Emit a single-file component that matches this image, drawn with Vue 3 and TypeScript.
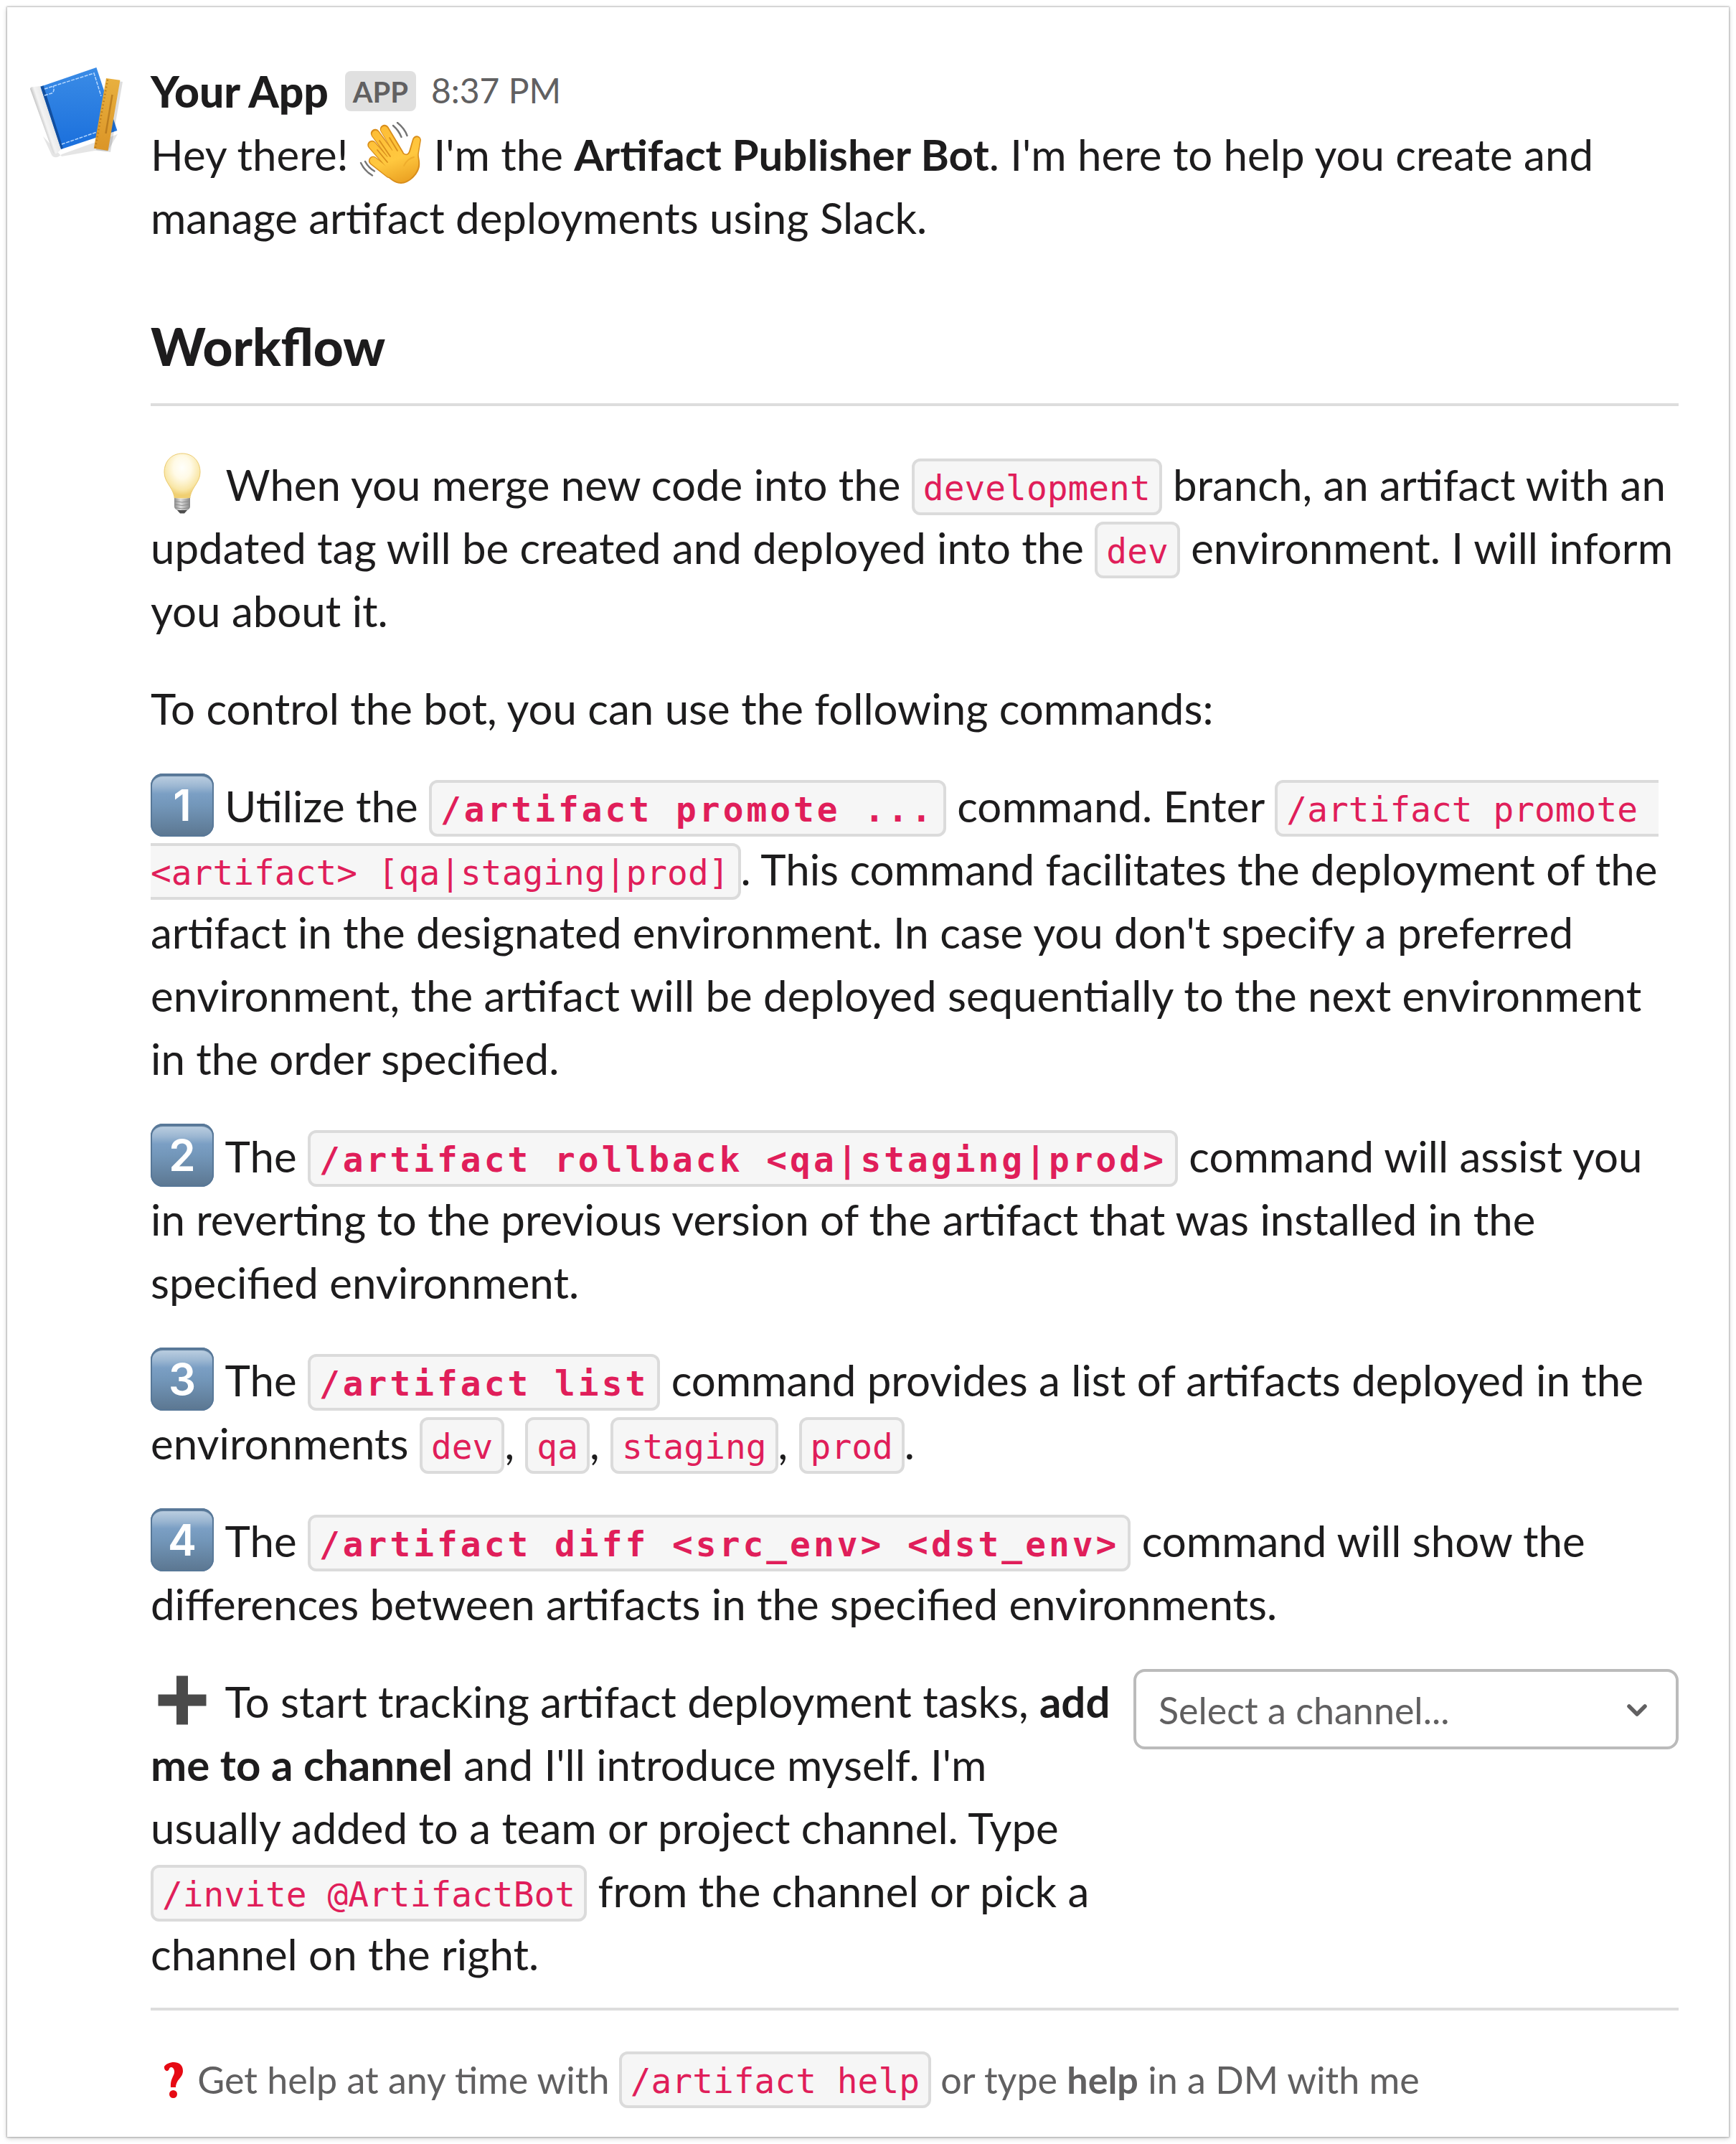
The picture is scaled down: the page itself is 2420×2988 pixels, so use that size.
<script setup lang="ts">
const environments: string[] = ['dev', 'qa', 'staging', 'prod']
</script>

<template>
  <main class="card">
    <svg class="avatar" viewBox="36 86 144 144">
      <defs>
        <linearGradient id="cover" x1="0" y1="0" x2="0" y2="1">
          <stop offset="0" stop-color="#3b8ce6" />
          <stop offset="1" stop-color="#1a6fdc" />
        </linearGradient>
        <linearGradient id="pages" gradientUnits="userSpaceOnUse" x1="56" y1="168" x2="71" y2="163">
          <stop offset="0" stop-color="#bdbdbd" />
          <stop offset=".4" stop-color="#f4f4f4" />
          <stop offset="1" stop-color="#e6e6e6" />
        </linearGradient>
        <linearGradient id="ruler" x1="0" y1="0" x2="0" y2="1">
          <stop offset="0" stop-color="#e8b03f" />
          <stop offset="1" stop-color="#db9527" />
        </linearGradient>
      </defs>
      <path d="M60 190l12 26c3 5 9 4 14-1l78-28-14 24-18-1-46 8z" fill="#000" opacity=".1" />
      <path d="M42 124q0-3 4-3l11-1 28 88-5 5q-5 4-7-3z" fill="url(#pages)" />
      <path d="M56.500 120.700L134.400 94l29 88-78.200 26z" fill="url(#cover)" />
      <path d="M56.500 120.700l4-1.400 27.500 87.500-3 1z" fill="#124f9f" />
      <path
        d="M62 124l69-22 10 32M86 201l49-17M62 133l10-3q5-3 2-10"
        fill="none" stroke="#b7d8ff" stroke-width="1.500" stroke-dasharray="5 1.500"
      />
      <path d="M151 111l20 3-17 98-20-3z" fill="#000" opacity=".13" />
      <path d="M148 109l19.400 2.700L150.600 210l-19.800-3.300z" fill="url(#ruler)" />
      <path d="M150 111L133 206" stroke="#b9791b" stroke-width="2.500" stroke-dasharray="1.500 3.500" fill="none" />
      <path d="M156.500 132l-9 54" stroke="#a96c17" stroke-width="2.500" opacity=".65" fill="none" />
    </svg>

    <section class="message">
      <header class="sender">
        <strong class="name">Your App</strong>
        <span class="badge">APP</span>
        <time class="time">8:37 PM</time>
      </header>

      <p class="intro">
        Hey there!
        <svg class="emoji" viewBox="0 0 88 88">
          <defs>
            <linearGradient id="skin" gradientUnits="userSpaceOnUse" x1="30" y1="0" x2="60" y2="88">
              <stop offset="0" stop-color="#fdbc35" />
              <stop offset=".6" stop-color="#ffc83f" />
              <stop offset="1" stop-color="#e99e20" />
            </linearGradient>
          </defs>
          <g fill="none" stroke-linecap="round">
            <g stroke="#d98e1b" stroke-width="12.500">
              <path d="M35 10L56 45" /><path d="M22 16L47 50" /><path d="M17.500 32L42 60" /><path d="M19 54L42 72" />
            </g>
            <path
              d="M37 62L34 53 49 34 60 42C66 46 67 45 69 41L74 24C76 17 85 18 86 25L83 43C82 49 85 53 84 62C82 74 69 86 58 86C50 86 42 80 34 71z"
              fill="#d98e1b"
            />
            <g stroke="url(#skin)" stroke-width="10">
              <path d="M35 11L56 46" /><path d="M22.500 17L47 50" /><path d="M18 32.500L42 60" /><path d="M19.500 54L42 72" />
            </g>
            <path
              d="M38 63L36 53 50 35 60 44C66 48 69 46 71 41L75.500 25C77 20 84 20 84.500 25L81.500 43C80.500 49 83 53 82 61C80 73 68 84 58 84C50 84 43 78 36 71z"
              fill="url(#skin)"
            />
            <path d="M28 26L43 48M25 39L39 56M42 22L53 40" stroke="#d98e1b" stroke-width="1.800" />
            <path d="M62 61q5-10 14-12" stroke="#efad2c" stroke-width="1.800" />
            <path d="M53 1q10 8 13.500 18M47 5q8 7 11.500 16M2 57q5 11 16 17.500M8 55q5 9 13 13.500" stroke="#757575" stroke-width="2.400" />
          </g>
        </svg>
        I'm the <b>Artifact Publisher Bot</b>. I'm here to help you create and manage artifact deployments using Slack.
      </p>

      <h1>Workflow</h1>
      <hr />

      <div class="body">
        <p>
          <svg class="emoji wide" viewBox="0 0 88 88">
            <defs>
              <radialGradient id="glass" cx=".5" cy=".32" r=".62">
                <stop offset="0" stop-color="#fffffb" />
                <stop offset=".4" stop-color="#fffae6" />
                <stop offset=".8" stop-color="#f9e7a8" />
                <stop offset="1" stop-color="#f0cf72" />
              </radialGradient>
              <linearGradient id="socket" x1="0" y1="0" x2="1" y2="0">
                <stop offset="0" stop-color="#8b8b8b" />
                <stop offset=".4" stop-color="#dedede" />
                <stop offset="1" stop-color="#858585" />
              </linearGradient>
            </defs>
            <path
              d="M44 2C29 2 19 13 19 28C19 42 30 48 33 62V64H55V62C58 48 69 42 69 28C69 13 59 2 44 2z"
              fill="url(#glass)" stroke="#eccb70" stroke-width="1"
            />
            <path d="M33 64q11 2 22 0v12q0 3-4 5H37q-4-2-4-5z" fill="url(#socket)" />
            <path d="M33.500 68.500q10 3 21 0M33.500 73q10 3 21 0M34 77.500q10 3 20 0" stroke="#8b8b8b" fill="none" />
            <path d="M37 81h14l-4 4.500h-6z" fill="#4d4d4d" />
          </svg>
          When you merge new code into the <code>development</code> branch, an artifact with an updated tag will be
          created and deployed into the <code>dev</code> environment. I will inform you about it.
        </p>

        <p>To control the bot, you can use the following commands:</p>

        <p>
          <span class="emoji keycap">1</span>
          Utilize the <code class="bold">/artifact promote ...</code> command. Enter
          <code>/artifact promote &lt;artifact&gt; [qa|staging|prod]</code>. This command facilitates the deployment of
          the artifact in the designated environment. In case you don't specify a preferred environment, the artifact
          will be deployed sequentially to the next environment in the order specified.
        </p>

        <p>
          <span class="emoji keycap wide">2</span>
          The <code class="bold">/artifact rollback &lt;qa|staging|prod&gt;</code> command will assist you in reverting
          to the previous version of the artifact that was installed in the specified environment.
        </p>

        <p>
          <span class="emoji keycap wide">3</span>
          The <code class="bold">/artifact list</code> command provides a list of artifacts deployed in the
          environments
          <template v-for="(env, i) in environments" :key="env"><code>{{ env }}</code>{{ i < environments.length - 1 ? ', ' : '.' }}</template>
        </p>

        <p>
          <span class="emoji keycap wide">4</span>
          The <code class="bold">/artifact diff &lt;src_env&gt; &lt;dst_env&gt;</code> command will show the
          differences between artifacts in the specified environments.
        </p>

        <div class="invite">
          <p>
            <svg class="emoji wide" viewBox="0 0 88 88">
              <path d="M36 9.500h16v26h25.500v16H52v26H36v-26H10.500v-16H36z" fill="#4a4a4a" />
            </svg>
            To start tracking artifact deployment tasks, <b>add me to a channel</b> and I'll introduce myself. I'm
            usually added to a team or project channel. Type <code>/invite @ArtifactBot</code> from the channel or pick
            a channel on the right.
          </p>
          <div class="select">
            <span>Select a channel...</span>
            <svg viewBox="0 0 28 18"><path d="M3 3l11 11L25 3" /></svg>
          </div>
        </div>
      </div>

      <hr class="last" />

      <footer>
        <svg class="mark" viewBox="0 0 52 52">
          <path
            d="M19 7C24-1 45-3 45 13C45 23 36 24 35 36H28C27 23 34 20 33 13C32 7 27 7 26 10C25 15 18 14 19 7z"
            fill="#e60a14"
          />
          <circle cx="31.500" cy="45.500" r="5.500" fill="#e60a14" />
        </svg>
        Get help at any time with <code>/artifact help</code> or type <b>help</b> in a DM with me
      </footer>
    </section>
  </main>
</template>

<style>
body {
  background: #fff;
}
#app {
  padding: 10px;
}
</style>

<style scoped>
.card {
  box-sizing: border-box;
  display: flex;
  gap: 30px;
  width: 2400px;
  height: 2968px;
  padding: 72px 70px 0 26px;
  background: #fff;
  box-shadow: 0 0 2px 1px rgba(0, 0, 0, 0.25), 0 2px 7px rgba(0, 0, 0, 0.2);
  color: #1d1c1d;
  font-family: Lato, sans-serif;
  font-size: 60px;
  line-height: 88px;
}
.avatar {
  flex: none;
  width: 144px;
  height: 144px;
  margin-top: 4px;
}
.message {
  width: 2130px;
}
p {
  margin: 0 0 -1px;
  padding-top: 1px;
}
.sender {
  box-sizing: border-box;
  display: flex;
  height: 88px;
  padding-top: 1px;
}
.name {
  font-size: 60.600px;
  font-weight: 900;
}
.badge {
  box-sizing: border-box;
  width: 99px;
  height: 56px;
  margin: 16px 21px 0 23px;
  border-radius: 8px;
  background: #e0e0e0;
  color: #616061;
  font-size: 40px;
  font-weight: 700;
  line-height: 59px;
  text-align: center;
}
.time {
  color: #616061;
  font-size: 48px;
  line-height: 86px;
}
.emoji {
  display: inline-block;
  width: 88px;
  height: 88px;
  margin-top: -1px;
  vertical-align: top;
}
.emoji.wide {
  margin-right: 2px;
}
.keycap {
  box-sizing: border-box;
  border-radius: 17px;
  background: linear-gradient(#c3d4e4, #9cb7d2 20%, #7b9fc4 32%, #7397ba 50%, #5b7690);
  box-shadow: inset 0 4px 1px #587898, inset 0 0 0 2px #587898;
  color: #fff;
  font-family: Inter, sans-serif;
  font-size: 60px;
  font-weight: 600;
  line-height: 88px;
  text-align: center;
}
h1 {
  margin: 92px 0 0;
  font-size: 72.800px;
  font-weight: 900;
  line-height: 88px;
}
hr {
  height: 4px;
  margin: 36px 0 64px;
  border: 0;
  background: #ddd;
}
hr.last {
  margin: 32px 0 52px;
}
.body {
  display: flex;
  flex-direction: column;
  gap: 48px;
}
code {
  position: relative;
  top: -1px;
  padding: 10px 12px 6px;
  border: 4px solid #dbdbdb;
  border-radius: 12px;
  background: #f6f6f6;
  color: #e01e5a;
  font-family: 'DejaVu Sans Mono', monospace;
  font-size: 47.850px;
  line-height: 1;
  font-variant-ligatures: none;
  white-space: pre-wrap;
}
code.bold {
  font-weight: 700;
  letter-spacing: 4px;
}
.invite {
  display: flex;
  justify-content: space-between;
  align-items: flex-start;
}
.invite p {
  width: 1342px;
}
.select {
  box-sizing: border-box;
  display: flex;
  align-items: center;
  justify-content: space-between;
  width: 760px;
  height: 112px;
  padding: 0 40px 0 31px;
  border: 4px solid #bbb;
  border-radius: 16px;
  color: #616061;
  font-size: 52px;
}
.select span {
  margin-top: 1px;
}
.select svg {
  width: 28px;
  height: 18px;
  margin-top: 3px;
  fill: none;
  stroke: #616061;
  stroke-width: 5.500;
  stroke-linecap: round;
  stroke-linejoin: round;
}
footer {
  color: #616061;
  font-size: 52px;
  white-space: nowrap;
}
.mark {
  display: inline-block;
  width: 52px;
  height: 52px;
  vertical-align: -7px;
}
</style>
